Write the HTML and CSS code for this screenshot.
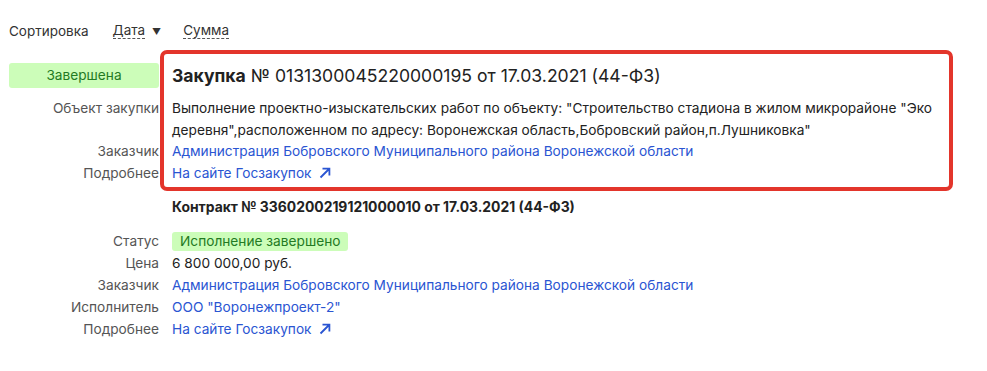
FILE: index.html
```html
<!DOCTYPE html>
<html>
<head>
    <title>Закупки</title>
    <link rel="stylesheet" href="styles.css">
</head>
<body>
    <div class="sort-bar">
        <span class="sort-title">Сортировка</span>
        <span class="sort-item">Дата</span>
        <span class="sort-arrow">&#9660;</span>
        <span class="sort-item">Сумма</span>
    </div>

    <div class="info-grid purchase">
        <div class="label"><span class="state-badge">Завершена</span></div>
        <div class="value purchase-title"><b>Закупка</b> № 0131300045220000195 от 17.03.2021 (44-ФЗ)</div>

        <div class="label">Объект закупки</div>
        <div class="value">Выполнение проектно-изыскательских работ по объекту: "Строительство стадиона в жилом микрорайоне "Эко деревня",расположенном по адресу: Воронежская область,Бобровский район,п.Лушниковка"</div>

        <div class="label">Заказчик</div>
        <div class="value"><a href="#">Администрация Бобровского Муниципального района Воронежской области</a></div>

        <div class="label">Подробнее</div>
        <div class="value">
            <a href="#">На сайте Госзакупок<svg class="ext-icon" width="12" height="12" viewBox="0 0 12 12"><path d="M1.5 10.5 L10 2 M3.5 1.6 H10.4 V8.5" fill="none" stroke="currentColor" stroke-width="1.8"/></svg></a>
        </div>
    </div>

    <div class="info-grid contract">
        <div class="label"></div>
        <div class="value contract-title">Контракт № 3360200219121000010 от 17.03.2021 (44-ФЗ)</div>

        <div class="label status-row">Статус</div>
        <div class="value status-row"><span class="status-badge">Исполнение завершено</span></div>

        <div class="label">Цена</div>
        <div class="value">6 800 000,00 руб.</div>

        <div class="label">Заказчик</div>
        <div class="value"><a href="#">Администрация Бобровского Муниципального района Воронежской области</a></div>

        <div class="label">Исполнитель</div>
        <div class="value"><a href="#">ООО "Воронежпроект-2"</a></div>

        <div class="label">Подробнее</div>
        <div class="value">
            <a href="#">На сайте Госзакупок<svg class="ext-icon" width="12" height="12" viewBox="0 0 12 12"><path d="M1.5 10.5 L10 2 M3.5 1.6 H10.4 V8.5" fill="none" stroke="currentColor" stroke-width="1.8"/></svg></a>
        </div>
    </div>
</body>
</html>
```

FILE: styles.css
```css
body {
    margin: 0;
    font-family: Inter, "Noto Sans", sans-serif;
    font-size: 13.7px;
    color: #222;
    background: #fff;
}
a {
    color: #2a55d2;
    text-decoration: none;
}
.sort-bar {
    display: flex;
    align-items: center;
    padding: 21px 0 0 9px;
    height: 20px;
    font-size: 13.5px;
    color: #333;
}
.sort-title {
    margin-right: 24px;
}
.sort-item {
    border-bottom: 1px dashed #555;
    line-height: 15px;
}
.sort-arrow {
    font-size: 9px;
    margin: 0 22px 0 7px;
}
.info-grid {
    display: grid;
    grid-template-columns: 150px 1fr;
    column-gap: 13px;
    padding: 0 40px 0 9px;
}
.purchase {
    position: relative;
    margin-top: 9px;
    padding-top: 13px;
    padding-bottom: 7px;
    line-height: 21.5px;
}
/* red outline drawn over the purchase block */
.purchase::after {
    content: "";
    position: absolute;
    top: 0;
    bottom: 0;
    left: 160px;
    right: 34px;
    border: 4px solid #e3352b;
    border-radius: 7px;
    pointer-events: none;
}
.contract {
    padding-top: 6px;
    line-height: 22px;
}
.label {
    text-align: right;
    color: #555;
    white-space: nowrap;
}
.value {
    grid-column: 2;
}
.state-badge {
    display: block;
    text-align: center;
    background: #ccfdb9;
    color: #237a23;
    border-radius: 3px;
    height: 25px;
    line-height: 25px;
}
.purchase-title {
    font-size: 17.6px;
    line-height: 25px;
    margin-bottom: 10px;
}
.ext-icon {
    margin-left: 7px;
    vertical-align: -1px;
}
.contract-title {
    font-weight: bold;
    font-size: 13.9px;
    line-height: 21.5px;
    margin-bottom: 13px;
}
.status-row {
    line-height: 19px;
    margin-bottom: 1px;
}
.status-badge {
    display: inline-block;
    background: #ccfdb9;
    color: #237a23;
    border-radius: 3px;
    padding: 0 8px;
}
```
